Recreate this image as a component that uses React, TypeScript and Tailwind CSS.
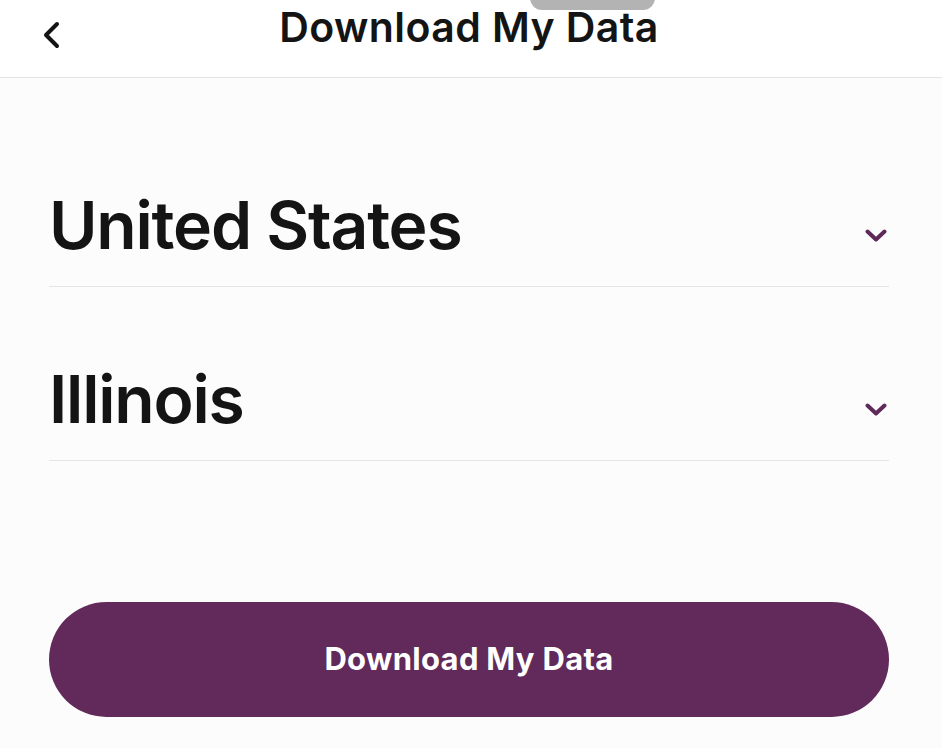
import React from "react";

const Chevron = () => (
  <svg width="22" height="14" viewBox="0 0 22 14" fill="none">
    <path d="M2.5 2.5 L11 10.5 L19.5 2.5" stroke="#5f2a5a" strokeWidth="4" strokeLinecap="round" strokeLinejoin="round" />
  </svg>
);

const Row = ({ label }: { label: string }) => (
  <div className="flex items-center justify-between border-b border-[#e6e4e4] h-[174px] pt-[50px]">
    <span className="text-[66px] font-semibold text-[#141414] tracking-[-1.2px] leading-none">{label}</span>
    <span className="mr-[2px] mt-[22px]">
      <Chevron />
    </span>
  </div>
);

export default function App() {
  return (
    <div className="w-[942px] h-[748px] overflow-hidden bg-[#fdfcfc] flex flex-col" style={{ fontFamily: "Inter, 'Noto Sans', sans-serif" }}>
      <header className="relative bg-white h-[78px] border-b border-[#e4e4e4] flex items-center justify-center shrink-0">
        <div className="absolute top-[-14px] left-[530px] w-[125px] h-[24px] rounded-full bg-[#b3b3b3]" />
        <button className="absolute left-[40px] top-[21px]">
          <svg width="22" height="28" viewBox="0 0 22 28" fill="none">
            <path d="M17 3 L6 14 L17 25" stroke="#141414" strokeWidth="4" strokeLinecap="round" strokeLinejoin="round" />
          </svg>
        </button>
        <h1 className="text-[41px] font-semibold text-[#141414] tracking-[0.4px] leading-none -mt-[22px] -ml-[4px]">Download My Data</h1>
      </header>
      <main className="pl-[49px] pr-[53px] pt-[35px] flex flex-col">
        <Row label="United States" />
        <Row label="Illinois" />
        <button className="mt-[141px] h-[115px] w-full rounded-full bg-[#612a5b] text-white text-[31px] font-bold tracking-[0.3px]">
          Download My Data
        </button>
      </main>
    </div>
  );
}
